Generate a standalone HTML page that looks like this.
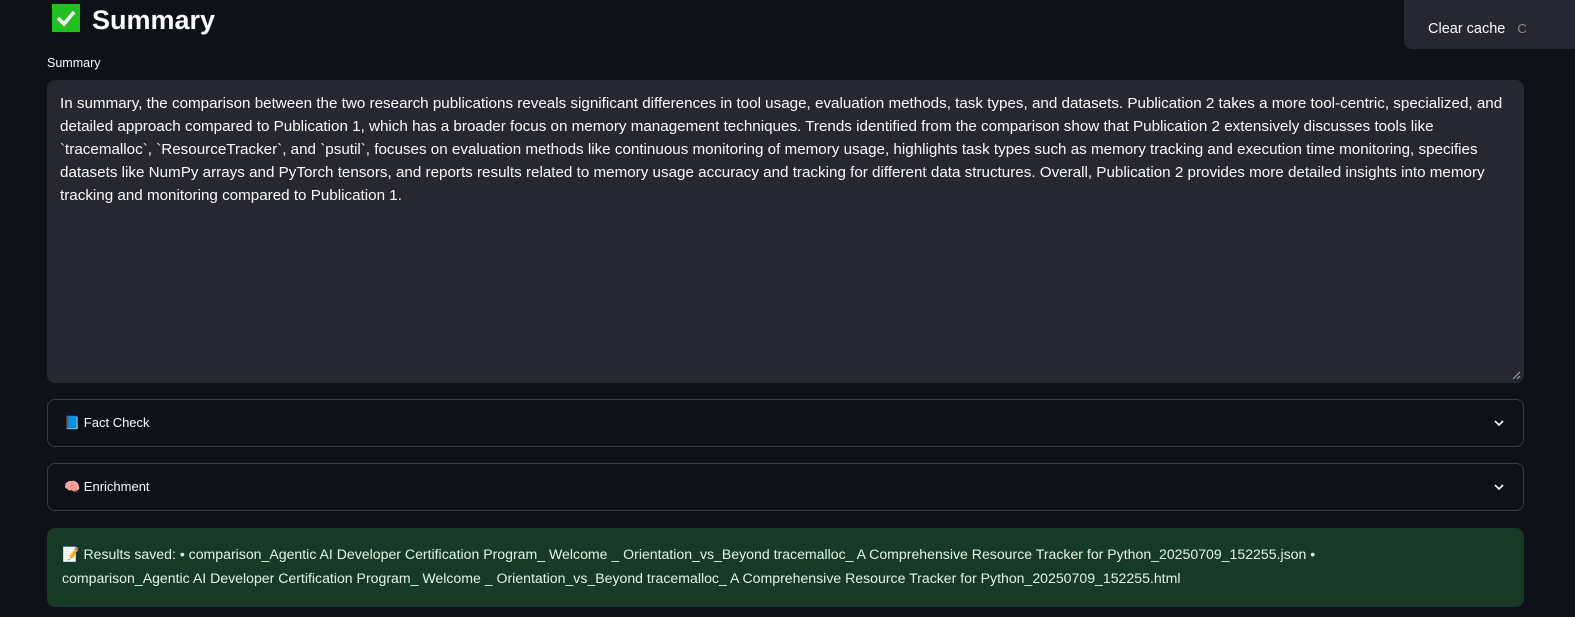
<!DOCTYPE html>
<html><head><meta charset="utf-8"><style>
html,body{margin:0;padding:0;background:#0e1117;width:1575px;height:617px;overflow:hidden;font-family:"Liberation Sans","Noto Sans CJK JP",sans-serif;color:#fafafa;}
.abs{position:absolute;}
h1{position:absolute;left:50px;top:2px;margin:0;font-size:27px;font-weight:bold;line-height:36px;}
.chk{display:inline-block;width:28px;height:28px;background:#1fc01f;border:2px solid #111;vertical-align:-5px;margin-right:10px;position:relative;}
.lbl{left:47px;top:56px;font-size:12.5px;}
.ta{left:47px;top:80px;width:1477px;height:303px;background:#262730;border-radius:8px;}
.ta div{position:absolute;left:13px;font-size:15.2px;white-space:nowrap;line-height:23px;color:#fafafa;}
.exp{left:47px;width:1475px;height:46px;border:1px solid #3a3c44;border-radius:8px;}
.exp span{position:absolute;left:16px;top:15px;font-size:13px;}
.exp svg{position:absolute;right:18px;top:17px;}
.ok{left:47px;top:528px;width:1477px;height:79px;background:#173928;border-radius:8px;color:#dff5e6;font-size:14.1px;}
.ok div{position:absolute;left:15px;white-space:nowrap;}
.menu{left:1404px;top:-10px;width:180px;height:59px;background:#262730;border-radius:8px;}
</style></head><body>
<h1><span class="chk"><svg width="28" height="28" viewBox="0 0 28 28" style="position:absolute;left:0;top:0"><path d="M6 14l6 6 10-12" stroke="#fff" stroke-width="3.5" fill="none"/></svg></span>Summary</h1>
<div class="abs lbl">Summary</div>
<div class="abs ta">
<div style="top:12px">In summary, the comparison between the two research publications reveals significant differences in tool usage, evaluation methods, task types, and datasets. Publication 2 takes a more tool-centric, specialized, and</div>
<div style="top:35px">detailed approach compared to Publication 1, which has a broader focus on memory management techniques. Trends identified from the comparison show that Publication 2 extensively discusses tools like</div>
<div style="top:58px">`tracemalloc`, `ResourceTracker`, and `psutil`, focuses on evaluation methods like continuous monitoring of memory usage, highlights task types such as memory tracking and execution time monitoring, specifies</div>
<div style="top:81px">datasets like NumPy arrays and PyTorch tensors, and reports results related to memory usage accuracy and tracking for different data structures. Overall, Publication 2 provides more detailed insights into memory</div>
<div style="top:104px">tracking and monitoring compared to Publication 1.</div>
<svg style="position:absolute;right:3px;bottom:3px" width="9" height="9"><path d="M8 1L1 8M8 5L5 8" stroke="#aaa" stroke-width="1"/></svg>
</div>
<div class="abs exp" style="top:399px"><span>📘 Fact Check</span><svg width="12" height="12" viewBox="0 0 12 12"><path d="M2 4l4 4 4-4" stroke="#fafafa" stroke-width="1.6" fill="none"/></svg></div>
<div class="abs exp" style="top:463px"><span>🧠 Enrichment</span><svg width="12" height="12" viewBox="0 0 12 12"><path d="M2 4l4 4 4-4" stroke="#fafafa" stroke-width="1.6" fill="none"/></svg></div>
<div class="abs ok">
<div style="top:18px">📝 Results saved: • comparison_Agentic AI Developer Certification Program_ Welcome _ Orientation_vs_Beyond tracemalloc_ A Comprehensive Resource Tracker for Python_20250709_152255.json •</div>
<div style="top:42px">comparison_Agentic AI Developer Certification Program_ Welcome _ Orientation_vs_Beyond tracemalloc_ A Comprehensive Resource Tracker for Python_20250709_152255.html</div>
</div>
<div class="abs menu"><div class="abs" style="left:24px;top:31px;font-size:14.5px;">Clear cache <span style="color:#888;margin-left:8px;font-size:13px">C</span></div></div>
</body></html>
